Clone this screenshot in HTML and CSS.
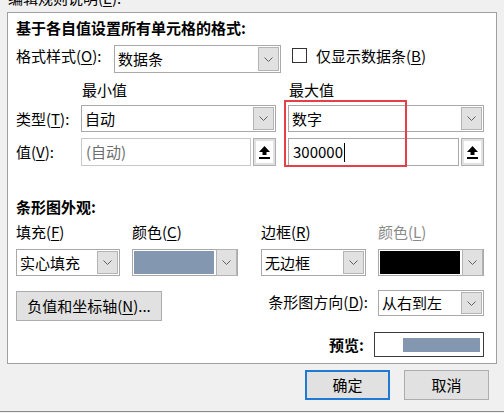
FILE: index.html
```html
<!DOCTYPE html>
<html lang="zh-CN">
<head>
<meta charset="utf-8">
<title>编辑格式规则</title>
<link rel="stylesheet" href="styles.css">
</head>
<body>
<div class="dialog">
  <div class="caption">编辑规则说明(<u>E</u>):</div>
  <div class="panel">
    <div class="heading">基于各自值设置所有单元格的格式:</div>

    <div class="row-style">
      <span class="lbl lbl-style">格式样式(<u>O</u>):</span>
      <div class="combo combo-style">
        <span class="val">数据条</span>
        <span class="drop"><svg width="9" height="5" viewBox="0 0 9 5"><polyline points="0.5,0.5 4.5,4.5 8.5,0.5" fill="none" stroke="#606060" stroke-width="1"/></svg></span>
      </div>
      <div class="check">
        <span class="box"></span>
        <span class="check-text">仅显示数据条(<u>B</u>)</span>
      </div>
    </div>

    <div class="values">
      <span class="colhead r1 c-min">最小值</span>
      <span class="colhead r1 c-max">最大值</span>

      <span class="lbl lbl-row r2 c-lbl">类型(<u>T</u>):</span>
      <div class="combo r2 c-min">
        <span class="val">自动</span>
        <span class="drop"><svg width="9" height="5" viewBox="0 0 9 5"><polyline points="0.5,0.5 4.5,4.5 8.5,0.5" fill="none" stroke="#606060" stroke-width="1"/></svg></span>
      </div>
      <div class="combo r2 c-max">
        <span class="val">数字</span>
        <span class="drop"><svg width="9" height="5" viewBox="0 0 9 5"><polyline points="0.5,0.5 4.5,4.5 8.5,0.5" fill="none" stroke="#606060" stroke-width="1"/></svg></span>
      </div>

      <span class="lbl lbl-row r3 c-lbl">值(<u>V</u>):</span>
      <div class="field r3 c-min">
        <span class="input disabled">(自动)</span>
        <span class="upbtn"><svg width="11" height="13" viewBox="0 0 11 13"><polygon points="5.5,0 11,6 7.5,6 7.5,9 3.5,9 3.5,6 0,6" fill="#000"/><rect x="0" y="11" width="11" height="2" fill="#000"/></svg></span>
      </div>
      <div class="field r3 c-max">
        <span class="input">300000<span class="caret"></span></span>
        <span class="upbtn"><svg width="11" height="13" viewBox="0 0 11 13"><polygon points="5.5,0 11,6 7.5,6 7.5,9 3.5,9 3.5,6 0,6" fill="#000"/><rect x="0" y="11" width="11" height="2" fill="#000"/></svg></span>
      </div>

      <div class="mark"></div>
    </div>

    <div class="heading heading2">条形图外观:</div>

    <div class="appearance">
      <span class="lbl">填充(<u>F</u>)</span>
      <span class="lbl">颜色(<u>C</u>)</span>
      <span class="lbl">边框(<u>R</u>)</span>
      <span class="lbl muted">颜色(<u>L</u>)</span>

      <div class="combo w104">
        <span class="val">实心填充</span>
        <span class="drop"><svg width="9" height="5" viewBox="0 0 9 5"><polyline points="0.5,0.5 4.5,4.5 8.5,0.5" fill="none" stroke="#606060" stroke-width="1"/></svg></span>
      </div>
      <div class="combo color-combo w106">
        <span class="swatch blue"></span>
        <span class="drop"><svg width="9" height="5" viewBox="0 0 9 5"><polyline points="0.5,0.5 4.5,4.5 8.5,0.5" fill="none" stroke="#606060" stroke-width="1"/></svg></span>
      </div>
      <div class="combo w105">
        <span class="val">无边框</span>
        <span class="drop"><svg width="9" height="5" viewBox="0 0 9 5"><polyline points="0.5,0.5 4.5,4.5 8.5,0.5" fill="none" stroke="#606060" stroke-width="1"/></svg></span>
      </div>
      <div class="combo color-combo w106">
        <span class="swatch black"></span>
        <span class="drop"><svg width="9" height="5" viewBox="0 0 9 5"><polyline points="0.5,0.5 4.5,4.5 8.5,0.5" fill="none" stroke="#606060" stroke-width="1"/></svg></span>
      </div>
    </div>

    <div class="bottom">
      <button class="btn btn-neg" type="button">负值和坐标轴(<u>N</u>)...</button>
      <div class="right-group">
        <div class="dir-row">
          <span class="lbl">条形图方向(<u>D</u>):</span>
          <div class="combo w106 combo-dir">
            <span class="val">从右到左</span>
            <span class="drop"><svg width="9" height="5" viewBox="0 0 9 5"><polyline points="0.5,0.5 4.5,4.5 8.5,0.5" fill="none" stroke="#606060" stroke-width="1"/></svg></span>
          </div>
        </div>
        <div class="preview-row">
          <span class="lbl bold">预览:</span>
          <div class="preview"><span class="preview-bar"></span></div>
        </div>
      </div>
    </div>
  </div>

  <div class="buttons">
    <button class="btn btn-ok" type="button">确定</button>
    <button class="btn" type="button">取消</button>
  </div>
  <div class="bottom-line"></div>
</div>
</body>
</html>
```

FILE: styles.css
```css
* { box-sizing: border-box; }
html, body { margin: 0; padding: 0; }
body {
  width: 504px;
  height: 413px;
  overflow: hidden;
  background: #f0f0f0;
  font-family: "Noto Sans CJK SC", "Microsoft YaHei", sans-serif;
  font-size: 15px;
  line-height: 20px;
  color: #000;
}
u { text-decoration: underline; text-underline-offset: 2px; text-decoration-thickness: 1px; }

.dialog { display: flex; flex-direction: column; height: 413px; }

.caption { margin: -12px 0 0 8px; height: 20px; white-space: nowrap; }

.panel {
  margin: 4px 0 0 7px;
  width: 490px;
  height: 352px;
  border: 1px solid #a0a0a0;
  background: #fff;
  padding: 5px 12px 0 8px;
}

.heading { font-weight: bold; height: 20px; white-space: nowrap; }
.heading2 { margin-top: 31px; }

.lbl { white-space: nowrap; height: 20px; }
.bold { font-weight: bold; }
.muted { color: #8a8a8a; }

/* combo box */
.combo {
  display: flex;
  height: 28px;
  border: 1px solid #a9a9a9;
  background: #fff;
  padding: 1px;
}
.combo .val {
  flex: 1;
  padding-left: 2px;
  display: flex;
  align-items: center;
  white-space: nowrap;
  overflow: hidden;
}
.drop {
  width: 21px;
  flex: none;
  background: #e1e1e1;
  border: 1px solid #b4b4b4;
  display: flex;
  align-items: center;
  justify-content: center;
}

/* row 1 */
.row-style { display: flex; align-items: flex-start; margin-top: 7px; height: 28px; }
.lbl-style { width: 98px; margin-top: 1px; }
.combo-style { width: 167px; }
.check { display: flex; align-items: flex-start; margin-left: 11px; }
.box { width: 15px; height: 15px; border: 1px solid #333; background: #fff; margin-top: 3px; }
.check-text { margin-left: 9px; margin-top: 1px; white-space: nowrap; }

/* min / max grid */
.values {
  position: relative;
  display: grid;
  grid-template-columns: 65px 195px 12px 196px;
  grid-template-rows: 25px 33px 28px;
  margin-top: 7px;
  align-items: start;
}
.r1 { grid-row: 1; }
.r2 { grid-row: 2; }
.r3 { grid-row: 3; }
.c-lbl { grid-column: 1; }
.c-min { grid-column: 2; }
.c-max { grid-column: 4; }
.colhead { padding-left: 1px; height: 20px; }
.values .combo { height: 27px; }
.lbl-row { margin-top: 4px; }
.field { display: flex; height: 28px; gap: 2px; }
.input {
  flex: 1;
  border: 1px solid #a9a9a9;
  padding-left: 4px;
  display: flex;
  align-items: center;
  white-space: nowrap;
}
.input.disabled { border-color: #c8c8c8; color: #6d6d6d; }
.caret { display: inline-block; width: 1px; height: 19px; background: #000; margin-left: 1px; }
.upbtn {
  width: 23px;
  flex: none;
  border: 1px solid #adadad;
  background: #fff;
  box-shadow: inset 0 0 0 2px #e1e1e1;
  display: flex;
  align-items: center;
  justify-content: center;
}
.mark {
  position: absolute;
  left: 268px;
  top: 20px;
  width: 123px;
  height: 67px;
  border: 2px solid #e5404a;
  pointer-events: none;
}

/* appearance */
.appearance {
  display: grid;
  grid-template-columns: 116px 129px 117px 106px;
  grid-template-rows: 20px 27px;
  row-gap: 7px;
  margin-top: 5px;
}
.appearance .combo { height: 27px; }
.w104 { width: 104px; }
.w105 { width: 105px; }
.w106 { width: 106px; }
.color-combo { padding: 1px 0 1px 1px; }
.color-combo .drop { margin-left: 2px; margin-top: -2px; margin-bottom: -2px; }
.swatch { flex: 1; }
.swatch.blue { background: #8497b0; }
.swatch.black { background: #000; }

/* bottom */
.bottom { display: flex; justify-content: space-between; align-items: flex-start; margin-top: 14px; }
.btn {
  font: inherit;
  color: #000;
  background: #e1e1e1;
  border: 1px solid #adadad;
  padding: 0;
  height: 30px;
  margin: 0;
}
.btn-neg { width: 146px; margin-top: 1px; }
.right-group { display: flex; flex-direction: column; align-items: flex-end; }
.dir-row { display: flex; align-items: center; height: 26px; }
.dir-row .lbl { margin-right: 10px; margin-top: -3px; }
.combo-dir { height: 26px; }
.preview-row { display: flex; align-items: center; margin-top: 16px; }
.preview-row .lbl { margin-right: 10px; }
.preview {
  width: 110px;
  height: 25px;
  border: 1px solid #3c3c3c;
  background: #fff;
  padding: 5px 3px 4px 0;
  display: flex;
  justify-content: flex-end;
}
.preview-bar { width: 77px; background: #8497b0; }

.buttons {
  display: flex;
  justify-content: flex-end;
  gap: 14px;
  padding-right: 15px;
  margin-top: 6px;
}
.buttons .btn { width: 85px; }
.btn-ok { border: 2px solid #1f7ad6; }

.bottom-line { margin-top: 11px; height: 1px; background: #8a8a8a; flex: none; }
```
